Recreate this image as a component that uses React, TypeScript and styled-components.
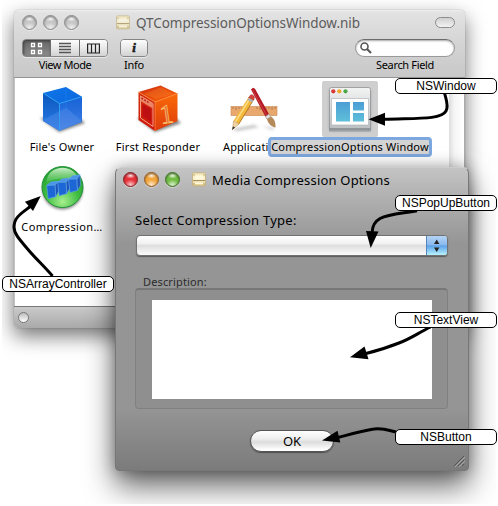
import React from "react";
import styled, { createGlobalStyle } from "styled-components";

const Global = createGlobalStyle`
  body { margin: 0; background: #fff; }
  * { box-sizing: border-box; }
`;

const Desktop = styled.main`
  position: relative;
  width: 498px;
  height: 506px;
  overflow: hidden;
  background: #fff;
  font-family: "Noto Sans", "Open Sans", sans-serif;
  color: #000;
`;

const Scene = styled.div`
  position: absolute;
  inset: 0 2px 2px 2px;
  overflow: hidden;
`;

const Text = styled.span<{ $size?: number; $space?: number; $color?: string }>`
  font-size: ${(p) => p.$size ?? 11}px;
  letter-spacing: ${(p) => p.$space ?? 0}px;
  color: ${(p) => p.$color ?? "#000"};
  line-height: 16px;
  white-space: nowrap;
`;

/* ---------- Document window ---------- */

const NibWindow = styled.section`
  position: absolute;
  left: 12px;
  top: 10px;
  width: 451px;
  height: 318px;
  display: flex;
  flex-direction: column;
  border-radius: 5px 5px 3px 3px;
  box-shadow: 0 8px 20px rgba(0, 0, 0, 0.55), 0 0 1px rgba(0, 0, 0, 0.5);
`;

const Header = styled.header`
  height: 68px;
  flex: none;
  display: flex;
  flex-direction: column;
  padding: 3px 10px 0 8px;
  background: linear-gradient(#ececec 0, #e2e2e2 3px, #d4d4d4 50%, #c8c8c8 100%);
  border-bottom: 1px solid #949494;
  border-radius: 5px 5px 0 0;
`;

const TitleRow = styled.div`
  display: flex;
  align-items: center;
  height: 19px;
`;

const Lights = styled.div`
  display: flex;
  gap: 6px;
`;

const Light = styled.i<{ $hue: string; $edge: string }>`
  width: 15px;
  height: 15px;
  border-radius: 50%;
  border: 1px solid ${(p) => p.$edge};
  background:
    radial-gradient(ellipse 5px 3px at 50% 20%, rgba(255, 255, 255, 0.9), transparent),
    radial-gradient(ellipse 6px 5px at 50% 90%, rgba(255, 255, 255, 0.75), transparent),
    ${(p) => p.$hue};
  box-shadow: inset 0 1px 2px rgba(0, 0, 0, 0.4), 0 1px 0 rgba(255, 255, 255, 0.4);
`;

const TitleGroup = styled.div<{ $left: number; $gap: number; $dim?: boolean }>`
  display: flex;
  align-items: center;
  margin-left: ${(p) => p.$left}px;
  gap: ${(p) => p.$gap}px;
  svg { opacity: ${(p) => (p.$dim ? 0.75 : 1)}; }
`;

const ToolbarPill = styled.i`
  margin-left: auto;
  width: 20px;
  height: 11px;
  border-radius: 6px;
  border: 1.5px solid #8b8b8b;
  background: linear-gradient(#cfcfcf, #f2f2f2);
`;

const Tools = styled.div`
  display: flex;
  margin-top: 7px;
`;

const Tool = styled.div<{ $width: number; $left?: string }>`
  width: ${(p) => p.$width}px;
  margin-left: ${(p) => p.$left ?? "0"};
  display: flex;
  flex-direction: column;
  align-items: center;
`;

const Segments = styled.div`
  display: flex;
  width: 100%;
  height: 18px;
  border: 1px solid #858585;
  border-radius: 4px;
  overflow: hidden;
  box-shadow: 0 1px 0 rgba(255, 255, 255, 0.5);
`;

const Segment = styled.div<{ $active?: boolean }>`
  flex: 1;
  display: grid;
  place-items: center;
  background: ${(p) =>
    p.$active ? "linear-gradient(#666, #8b8b8b)" : "linear-gradient(#fdfdfd, #e9e9e9 50%, #d2d2d2)"};
  box-shadow: ${(p) => (p.$active ? "inset 1px 1px 3px rgba(0,0,0,.45)" : "none")};
  & + & { border-left: 1px solid #6d6d6d; }
`;

const InfoGlyph = styled.span`
  font: italic bold 13px/14px "Liberation Serif", serif;
  color: #1c1c1c;
  -webkit-text-stroke: 0.6px #1c1c1c;
`;

const Search = styled.div`
  width: 100%;
  height: 18px;
  padding-left: 4px;
  display: flex;
  align-items: center;
  border-radius: 9px;
  border: 1px solid #999;
  border-top-color: #6c6c6c;
  background: #fff;
  box-shadow: inset 0 1px 2px rgba(0, 0, 0, 0.35);
`;

const Body = styled.div`
  flex: 1;
  display: flex;
  background: #fff;
  box-shadow: inset 1px 0 #c4c4c4;
`;

const IconGrid = styled.div`
  flex: 1;
  display: grid;
  grid-template-columns: repeat(4, 96px);
  grid-auto-rows: 80px;
  padding-top: 3px;
`;

const Track = styled.div`
  width: 16px;
  background: linear-gradient(90deg, #dedede, #f5f5f5 35%, #fff);
  border-right: 1px solid #aaa;
`;

const Cell = styled.div`
  position: relative;
  display: flex;
  flex-direction: column;
  align-items: center;
  height: 80px;
`;

const IconBox = styled.div<{ $selected?: boolean }>`
  width: 56px;
  height: 56px;
  border-radius: 2px;
  background: ${(p) => (p.$selected ? "#cfcfcf" : "transparent")};
`;

const CellLabel = styled.div<{ $clipped?: boolean }>`
  margin-top: 2px;
  margin-left: ${(p) => (p.$clipped ? "17px" : "0")};
  align-self: ${(p) => (p.$clipped ? "flex-start" : "auto")};
  height: 16px;
  display: flex;
`;

const EditField = styled.div`
  position: absolute;
  top: 56px;
  left: -34px;
  width: 164px;
  height: 20px;
  display: flex;
  align-items: center;
  justify-content: center;
  border: 3px solid #7da7df;
  border-radius: 4px;
  background: #d4d4d4;
`;

const StatusBar = styled.footer`
  height: 22px;
  flex: none;
  display: flex;
  align-items: center;
  padding-left: 4px;
  background: linear-gradient(#cacaca, #a9a9a9);
  border-top: 1px solid #777;
  border-radius: 0 0 4px 4px;
`;

const StatusDot = styled.i`
  width: 11px;
  height: 11px;
  border-radius: 50%;
  border: 1.5px solid #777;
  background: linear-gradient(#bdbdbd, #fff);
`;

/* ---------- Dialog ---------- */

const Dialog = styled.section`
  position: absolute;
  left: 113px;
  top: 167px;
  width: 354px;
  height: 304px;
  display: flex;
  flex-direction: column;
  border-radius: 6px 6px 4px 4px;
  border: 1px solid #777;
  border-top-color: #ccc;
  background: linear-gradient(#c4c4c4 0, #b3b3b3 25px, #959595 76px, #959595 240px, #7b7b7b 100%);
  box-shadow: 0 15px 30px rgba(0, 0, 0, 0.62), 0 0 14px rgba(0, 0, 0, 0.25);
`;

const DialogTitle = styled.header`
  height: 23px;
  flex: none;
  display: flex;
  align-items: center;
  padding-left: 7px;
`;

const DialogBody = styled.div`
  flex: 1;
  display: flex;
  flex-direction: column;
  padding: 21px 20px 0 19px;
`;

const PopUp = styled.div`
  margin: 7px 0 0 1px;
  height: 21px;
  width: 312px;
  display: flex;
  justify-content: flex-end;
  border: 1px solid #717171;
  border-radius: 4px;
  overflow: hidden;
  background: linear-gradient(#fff, #f1f1f1 40%, #dedede 50%, #fbfbfb);
  box-shadow: 0 1px 1px rgba(0, 0, 0, 0.4);
`;

const Stepper = styled.div`
  width: 21px;
  display: grid;
  place-items: center;
  border-left: 1px solid #5484bd;
  background: linear-gradient(#b5d4f5, #8bb9ee 46%, #5ba2e8 52%, #b8f2ff);
`;

const GroupLabel = styled.div`
  margin: 18px 0 0 8px;
  height: 14px;
  display: flex;
`;

const GroupBox = styled.div`
  width: 313px;
  height: 121px;
  padding: 10px 15px 0 16px;
  border: 1px solid #808080;
  border-top: 2px solid #777;
  border-radius: 4px;
  background: #8f8f8f;
`;

const TextArea = styled.div`
  width: 280px;
  height: 99px;
  background: #fff;
`;

const Actions = styled.div`
  display: flex;
  padding: 21px 0 0 115px;
`;

const OkButton = styled.div`
  width: 84px;
  height: 22px;
  display: grid;
  place-items: center;
  border: 1px solid #555;
  border-radius: 11px;
  background: linear-gradient(#fff, #eee 40%, #dcdcdc 55%, #fff 95%);
  box-shadow: 0 1px 1px rgba(0, 0, 0, 0.4);
`;

const Grip = styled.svg`
  position: absolute;
  right: 3px;
  bottom: 3px;
`;

/* ---------- Annotations ---------- */

const Callout = styled.div<{ $x: number; $y: number; $w: number }>`
  position: absolute;
  left: ${(p) => p.$x}px;
  top: ${(p) => p.$y}px;
  width: ${(p) => p.$w}px;
  height: 16px;
  border: 1px solid #000;
  border-radius: 5px;
  background: #fff;
  font: 12px/14px "Liberation Sans", Arial, sans-serif;
  text-align: center;
  white-space: nowrap;
`;

const Arrows = styled.svg`
  position: absolute;
  inset: 0;
`;

const NibIcon = () => (
  <svg width="14" height="15" viewBox="0 0 14 15">
    <defs>
      <linearGradient id="nib" x2="0" y2="1">
        <stop offset="0" stopColor="#f3e6b4" />
        <stop offset=".45" stopColor="#fbf3cf" />
        <stop offset="1" stopColor="#dcc88a" />
      </linearGradient>
    </defs>
    <rect x=".5" y=".8" width="13" height="13.2" rx="1" fill="url(#nib)" stroke="#bfae7c" strokeWidth=".8" />
    <path d="M3 3.500h8v4H3z" fill="#fdf7dc" />
    <path d="M1 8.500h12" stroke="#a8915a" />
    <path d="M3 11.300h8" stroke="#fff8dc" strokeWidth="1.600" />
    <path d="M1.500 3h1M11.500 3h1M1.500 12h1M11.500 12h1" stroke="#92793f" />
  </svg>
);

const BlueCube = () => (
  <svg width="56" height="56" viewBox="33 81 56 56">
    <defs>
      <linearGradient id="bt" x2="1" y2="1"><stop stopColor="#0e76ea" /><stop offset="1" stopColor="#0c67dc" /></linearGradient>
      <linearGradient id="bl" x2="0" y2="1"><stop stopColor="#0a58bd" /><stop offset="1" stopColor="#2c7be8" /></linearGradient>
      <linearGradient id="br" x2="0" y2="1"><stop stopColor="#1562d8" /><stop offset="1" stopColor="#4280e2" /></linearGradient>
      <filter id="soft" x="-50%" y="-50%" width="200%" height="200%"><feGaussianBlur stdDeviation="1.8" /></filter>
    </defs>
    <path d="M39 118l19 14 26-9-8-7z" fill="#000" opacity=".5" filter="url(#soft)" />
    <path d="M42 93l23-6 16 9.700-22.500 6.800z" fill="url(#bt)" />
    <path d="M42 93l16.500 10.500V131L42 121z" fill="url(#bl)" />
    <path d="M58.500 103.500L81 96.700V122l-22.500 9z" fill="url(#br)" />
    <path d="M42 120l23-12 16 13.500-22.500 9z" fill="#6c9bee" opacity=".3" />
    <path d="M65 88v20L42 120M65 108l16 13" stroke="#2391f5" strokeWidth=".7" fill="none" opacity=".4" />
    <path d="M42 93l16.500 10.500L81 96.700M58.500 103.500V131" stroke="#26a5f6" strokeWidth=".8" fill="none" />
  </svg>
);

const RedCube = () => (
  <svg width="56" height="56" viewBox="33 81 56 56">
    <defs>
      <linearGradient id="rt" x2="1" y2="1"><stop stopColor="#cc2b0c" /><stop offset="1" stopColor="#ff6a0a" /></linearGradient>
      <linearGradient id="rl" x2="0" y2="1"><stop stopColor="#d1310e" /><stop offset="1" stopColor="#d0150b" /></linearGradient>
      <linearGradient id="rr" x2="0" y2="1"><stop stopColor="#fa6a08" /><stop offset="1" stopColor="#de3b0c" /></linearGradient>
    </defs>
    <path d="M40 118l18 14 26-9-8-7z" fill="#000" opacity=".5" filter="url(#soft)" />
    <path d="M41.500 92l22-6.500L80.500 93.500 58 102z" fill="url(#rt)" />
    <path d="M41.500 92L58 102v29l-16.500-11z" fill="url(#rl)" />
    <path d="M58 102l22.500-8.500V121L58 131z" fill="url(#rr)" />
    <path d="M47 94l17-7 12 7-17 5z" fill="#ff9b38" opacity=".25" />
    <path d="M43.500 96l12.500 7.500v23L43.500 118z" fill="none" stroke="#f7a184" strokeWidth="1" />
    <path d="M43.500 96l12.500 7.500v5L43.500 101z" fill="#e98469" />
    <path d="M44.500 98.200l1.500 1M47.300 99.800l1.500 1M50 101.500l1.500 1" stroke="#b71e0b" strokeWidth="1.400" />
    <path d="M45.500 104l8.500 5v13l-8.500-6z" fill="#bd0e12" />
    <path d="M58 102l22.500-8.500M58 102v29M41.500 92L58 102" stroke="#ff8a3c" strokeWidth=".8" fill="none" />
    <text x="63" y="123.500" transform="rotate(-8 67 116)" fontFamily="Liberation Serif, serif" fontSize="27" fill="#df6a38" stroke="#ffc56d" strokeWidth=".7">1</text>
  </svg>
);

const AppIcon = () => (
  <svg width="56" height="56" viewBox="226 81 56 56">
    <path d="M232 129l22-4 5 2-22 4zM262 126l12 2-1 2z" fill="#777" opacity=".45" filter="url(#soft)" />
    <rect x="231" y="106.500" width="46" height="9" fill="#e9a86d" stroke="#c78852" strokeWidth=".6" />
    <path d="M233 107v2M236 107v3M239 107v2M242 107v3M245 107v2M248 107v3M257 107v2M260 107v3M263 107v2M266 107v3M269 107v2M272 107v3M275 107v2" stroke="#9e6538" strokeWidth=".7" />
    <path d="M251 89.500l2-1.700 2 1 14 25.500-3.500 2.500z" fill="#b41924" />
    <path d="M252.500 90l14 25" stroke="#d4504c" strokeWidth=".8" />
    <path d="M265.500 116.500l3.500-2.500 2 3-4 2.500z" fill="#ddd" stroke="#888" strokeWidth=".5" />
    <path d="M267 119l4-2.500c4 3 4.500 6 4.500 11-4-.5-7.500-4-8.500-8.500z" fill="#b58a5b" />
    <path d="M249 96.500l5 2.500L239 124l-5.500-3z" fill="#f2b93a" />
    <path d="M250.500 97.500l-15.500 25" stroke="#fbdc86" strokeWidth="1.500" />
    <path d="M254 99l-15.500 25.500" stroke="#aa6b11" strokeWidth=".8" />
    <path d="M233.500 121l5.500 3-6.500 5.500z" fill="#f0d3a3" stroke="#b58e5e" strokeWidth=".5" />
    <path d="M233 126.500l2 1-3 2.500z" fill="#222" />
    <path d="M249.500 96.500c1-3 4.500-1.500 5 1l-1 2.500-5-2.500z" fill="#d6453c" stroke="#963030" strokeWidth=".5" />
    <path d="M248 99l5 2.500" stroke="#aab0bb" strokeWidth="2" />
  </svg>
);

const WindowIcon = () => (
  <svg width="56" height="56" viewBox="322 81 56 56">
    <defs>
      <linearGradient id="wf" x2="0" y2="1"><stop stopColor="#f3f3f3" /><stop offset="1" stopColor="#b9bdbf" /></linearGradient>
      <linearGradient id="wb" x2="0" y2="1"><stop stopColor="#4b9ed5" /><stop offset="1" stopColor="#5fbfd9" /></linearGradient>
    </defs>
    <rect x="329" y="89" width="42" height="42" rx="2" fill="#777" opacity=".4" filter="url(#soft)" />
    <path d="M329.500 131V89.500q0-2 2-2h37q2 0 2 2V131z" fill="url(#wf)" stroke="#8f9294" strokeWidth=".8" />
    <path d="M329 128h42v2.500h-42z" fill="#8f9598" />
    <circle cx="333.300" cy="91.300" r="2.100" fill="#d83a36" />
    <circle cx="339.300" cy="91.300" r="2.100" fill="#f1a42a" />
    <circle cx="345.500" cy="91.300" r="2.100" fill="#4ca946" />
    <path d="M331.500 98.500h37v26.500h-37z" fill="#fff" stroke="#a7abad" strokeWidth=".6" />
    <path d="M336 102h14v19.500h-14zM353 102h11v8.500h-11zM353 113h11v8.500h-11z" fill="url(#wb)" />
  </svg>
);

const cubes: [number, number][] = [[46.2, 185.5], [57.2, 182.5], [68, 179.3]];

const ControllerIcon = () => (
  <svg width="56" height="56" viewBox="33.500 161 56 56">
    <defs>
      <radialGradient id="gb" cx=".5" cy=".85" r=".8"><stop stopColor="#a6ee8d" /><stop offset=".5" stopColor="#3fbd42" /><stop offset="1" stopColor="#22a030" /></radialGradient>
      <linearGradient id="gh" x2="0" y2="1"><stop stopColor="#e1f8dd" stopOpacity=".9" /><stop offset="1" stopColor="#86d97f" stopOpacity=".3" /></linearGradient>
    </defs>
    <ellipse cx="62" cy="190" rx="20" ry="19.500" fill="#000" opacity=".5" filter="url(#soft)" />
    <circle cx="62" cy="187" r="20.500" fill="url(#gb)" stroke="#22923a" />
    <path d="M46 182c1-19 31-19 32 0-9-5-22-4-32 0z" fill="url(#gh)" />
    {cubes.map(([x, y]) => (
      <g key={x} strokeWidth=".6" stroke="#5fa6ee" strokeLinejoin="round">
        <path d={`M${x} ${y}l4-3.500 7.500-1-3 4.200z`} fill="#4b94e8" />
        <path d={`M${x} ${y}l8.500-.3.500 11.500-7.500 2z`} fill="#1c67d5" />
        <path d={`M${x + 8.5} ${y - 0.3}l3-4.200.5 10.500-3 5.200z`} fill="#1f55b8" />
      </g>
    ))}
  </svg>
);

type Line = { d: string; head: string };
const lines: Line[] = [
  { d: "M444.500 93C446 99 449 106 446 111C441 120 416 118 384 119.300", head: "368.500,119.300 385,112.700 385,125.700" },
  { d: "M417 210.700C402 213.500 389 214 380 218.500C374 222 372.300 226 372.200 232", head: "370.700,248 366,231 378.500,231.500" },
  { d: "M430.500 327C418 333 412 338 399 343C389 347 378 350.500 366 353.500", head: "350,357.300 364.500,346.500 368.500,359.300" },
  { d: "M396 432C389 430.500 383 427.500 374 429C363 430.500 351 434 338 437.500", head: "322,440.500 337.500,430.700 340.300,442.600" },
  { d: "M52.500 276C43 265 36 259 28 249.500C18 238 14 233 14 227C14 217 22 213 31 206", head: "40.800,196 25,201.700 33,211" },
];

export default function App() {
  return (
    <>
      <Global />
      <Desktop>
        <Scene>
          <NibWindow>
            <Header>
              <TitleRow>
                <Lights>
                  {[0, 1, 2].map((n) => <Light key={n} $hue="#c6c6c6" $edge="#8c8c8c" />)}
                </Lights>
                <TitleGroup $left={37} $gap={6} $dim>
                  <NibIcon />
                  <Text $size={13.5} $space={-0.05} $color="#5c5c5c">QTCompressionOptionsWindow.nib</Text>
                </TitleGroup>
                <ToolbarPill />
              </TitleRow>
              <Tools>
                <Tool $width={86}>
                  <Segments>
                    <Segment $active>
                      <svg width="13" height="13" viewBox="0 0 13 13" fill="none" stroke="#fff" strokeWidth="1.300">
                        <path d="M1.500 1.500h3v3h-3zM8.500 1.500h3v3h-3zM1.500 8.500h3v3h-3zM8.500 8.500h3v3h-3z" />
                      </svg>
                    </Segment>
                    <Segment>
                      <svg width="12" height="12" stroke="#555" strokeWidth="1.500"><path d="M0 1.500h12M0 4.500h12M0 7.500h12M0 10.500h12" /></svg>
                    </Segment>
                    <Segment>
                      <svg width="13" height="11" fill="none" stroke="#222" strokeWidth="1.200"><path d="M.6 1h11.800v9H.6zM4.500 1v9M8.500 1v9" /></svg>
                    </Segment>
                  </Segments>
                  <Text $space={-0.45}>View Mode</Text>
                </Tool>
                <Tool $width={28} $left="12px">
                  <Segments><Segment><InfoGlyph>i</InfoGlyph></Segment></Segments>
                  <Text $space={-0.3}>Info</Text>
                </Tool>
                <Tool $width={100} $left="auto">
                  <Search>
                    <svg width="12" height="12" viewBox="0 0 12 12" fill="none" stroke="#555">
                      <circle cx="4.500" cy="4.500" r="3.500" strokeWidth="1.600" /><path d="M7 7l4 4" strokeWidth="2.200" />
                    </svg>
                  </Search>
                  <Text $space={-0.35}>Search Field</Text>
                </Tool>
              </Tools>
            </Header>
            <Body>
              <IconGrid>
                <Cell><IconBox><BlueCube /></IconBox><CellLabel><Text $space={0.18}>File's Owner</Text></CellLabel></Cell>
                <Cell><IconBox><RedCube /></IconBox><CellLabel><Text $space={0.22}>First Responder</Text></CellLabel></Cell>
                <Cell><IconBox><AppIcon /></IconBox><CellLabel $clipped><Text $space={0.1}>Applicati</Text></CellLabel></Cell>
                <Cell>
                  <IconBox $selected><WindowIcon /></IconBox>
                  <EditField><Text $space={0.16}>CompressionOptions Window</Text></EditField>
                </Cell>
                <Cell><IconBox><ControllerIcon /></IconBox><CellLabel><Text $space={0.38}>Compression…</Text></CellLabel></Cell>
              </IconGrid>
              <Track />
            </Body>
            <StatusBar><StatusDot /></StatusBar>
          </NibWindow>

          <Dialog>
            <DialogTitle>
              <Lights>
                <Light $hue="#e8333b" $edge="#7e2527" />
                <Light $hue="#f3a63c" $edge="#87552b" />
                <Light $hue="#72bd43" $edge="#3d6b2b" />
              </Lights>
              <TitleGroup $left={12} $gap={6}>
                <NibIcon />
                <Text $size={13} $space={0.19}>Media Compression Options</Text>
              </TitleGroup>
            </DialogTitle>
            <DialogBody>
              <Text $size={13} $space={0.25}>Select Compression Type:</Text>
              <PopUp>
                <Stepper>
                  <svg width="8" height="13" fill="#222"><path d="M1 5L3.700.500 6.400 5zM1 8.500h5.400L3.700 13z" /></svg>
                </Stepper>
              </PopUp>
              <GroupLabel><Text $space={0.14} $color="#2b2b2b">Description:</Text></GroupLabel>
              <GroupBox><TextArea /></GroupBox>
              <Actions><OkButton><Text $size={13}>OK</Text></OkButton></Actions>
            </DialogBody>
            <Grip width="12" height="12" fill="none">
              <path d="M1 11L11 1M5 11l6-6M9 11l2-2" stroke="#555" />
              <path d="M2 12L12 2M6 12l6-6" stroke="#bbb" strokeWidth=".7" />
            </Grip>
          </Dialog>
        </Scene>

        <Arrows width="498" height="506">
          {lines.map((l) => (
            <g key={l.head}>
              <path d={l.d} fill="none" stroke="#000" strokeWidth="3" />
              <polygon points={l.head} />
            </g>
          ))}
        </Arrows>
        <Callout $x={395} $y={78} $w={102}>NSWindow</Callout>
        <Callout $x={395} $y={195} $w={102}>NSPopUpButton</Callout>
        <Callout $x={395} $y={312} $w={102}>NSTextView</Callout>
        <Callout $x={395} $y={429} $w={102}>NSButton</Callout>
        <Callout $x={2} $y={276} $w={112}>NSArrayController</Callout>
      </Desktop>
    </>
  );
}
